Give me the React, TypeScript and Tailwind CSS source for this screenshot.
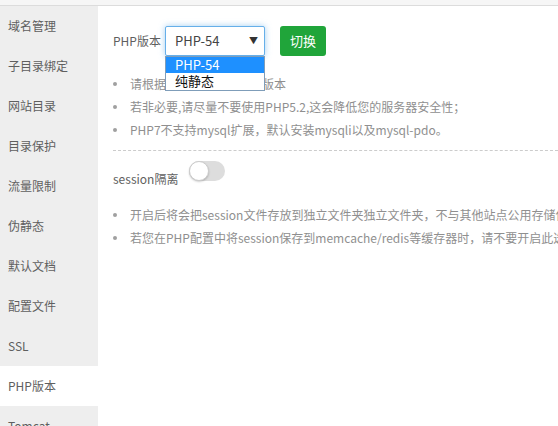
import React from "react";

const font = { fontFamily: '"Noto Sans CJK SC", "Noto Sans", sans-serif' };

const items = ["域名管理", "子目录绑定", "网站目录", "目录保护", "流量限制", "伪静态", "默认文档", "配置文件", "SSL", "PHP版本", "Tomcat"];

function Bullet({ children }: { children: React.ReactNode }) {
  return (
    <li className="flex items-center h-[23px] text-[12px] text-[#8f8f8f] whitespace-nowrap">
      <span className="w-[4px] h-[4px] rounded-full bg-[#a0a0a0] mr-[13px] shrink-0" />
      <span>{children}</span>
    </li>
  );
}

export default function App() {
  return (
    <div className="w-[558px] h-[426px] overflow-hidden bg-white flex flex-col" style={font}>
      <div className="h-[6px] shrink-0 bg-[#f6f6f6] border-b border-[#dcdcdc]" />
      <div className="flex flex-1 min-h-0">
        <div className="w-[98px] shrink-0 bg-[#eeeeee] flex flex-col">
          {items.map((it) => (
            <div
              key={it}
              className={`h-[40px] shrink-0 flex items-center pl-[8px] text-[12px] text-[#5f5f5f] ${it === "PHP版本" ? "bg-white" : ""}`}
            >
              {it}
            </div>
          ))}
        </div>
        <div className="flex-1 min-w-0 pl-[15px] pt-[20px]">
          <div className="flex items-center h-[30px]">
            <span className="text-[12px] text-[#5f5f5f] w-[52px]">PHP版本</span>
            <div className="relative">
              <div className="w-[100px] h-[30px] border border-[#66afe9] rounded-[2px] shadow-[0_0_6px_rgba(102,175,233,0.6)] flex items-center justify-between pl-[9px] pr-[6px] text-[13px] text-[#444] bg-white">
                <span>PHP-54</span>
                <span className="text-[9px] text-[#333]">▼</span>
              </div>
              <div className="absolute left-0 top-[30px] w-[100px] border border-[#7f9db9] bg-white z-10 text-[13px] leading-[16px]">
                <div className="bg-[#1e90ff] text-white pl-[9px] h-[16px]">PHP-54</div>
                <div className="text-[#111] pl-[9px] h-[17px]">纯静态</div>
              </div>
            </div>
            <button className="ml-[15px] w-[46px] h-[30px] rounded-[3px] bg-[#20a53a] text-white text-[13px]">切换</button>
          </div>
          <ul className="mt-[16px] flex flex-col">
            <Bullet>请根据您的程序需求选择版本</Bullet>
            <Bullet>若非必要,请尽量不要使用PHP5.2,这会降低您的服务器安全性；</Bullet>
            <Bullet>PHP7不支持mysql扩展，默认安装mysqli以及mysql-pdo。</Bullet>
          </ul>
          <div className="mt-[9px] border-t border-dashed border-[#ccc]" />
          <div className="flex items-end mt-[10px] h-[26px]">
            <span className="text-[12px] text-[#5f5f5f] mr-[11px] leading-[16px]">session隔离</span>
            <div className="w-[36px] h-[20px] rounded-full bg-[#dddddd] relative mb-[6px]">
              <div className="absolute left-0 top-0 w-[20px] h-[20px] rounded-full bg-white border border-[#ccc] shadow-[0_1px_2px_rgba(0,0,0,0.2)]" />
            </div>
          </div>
          <ul className="mt-[16px] flex flex-col">
            <Bullet>开启后将会把session文件存放到独立文件夹独立文件夹，不与其他站点公用存储位置</Bullet>
            <Bullet>若您在PHP配置中将session保存到memcache/redis等缓存器时，请不要开启此选项</Bullet>
          </ul>
        </div>
      </div>
    </div>
  );
}
